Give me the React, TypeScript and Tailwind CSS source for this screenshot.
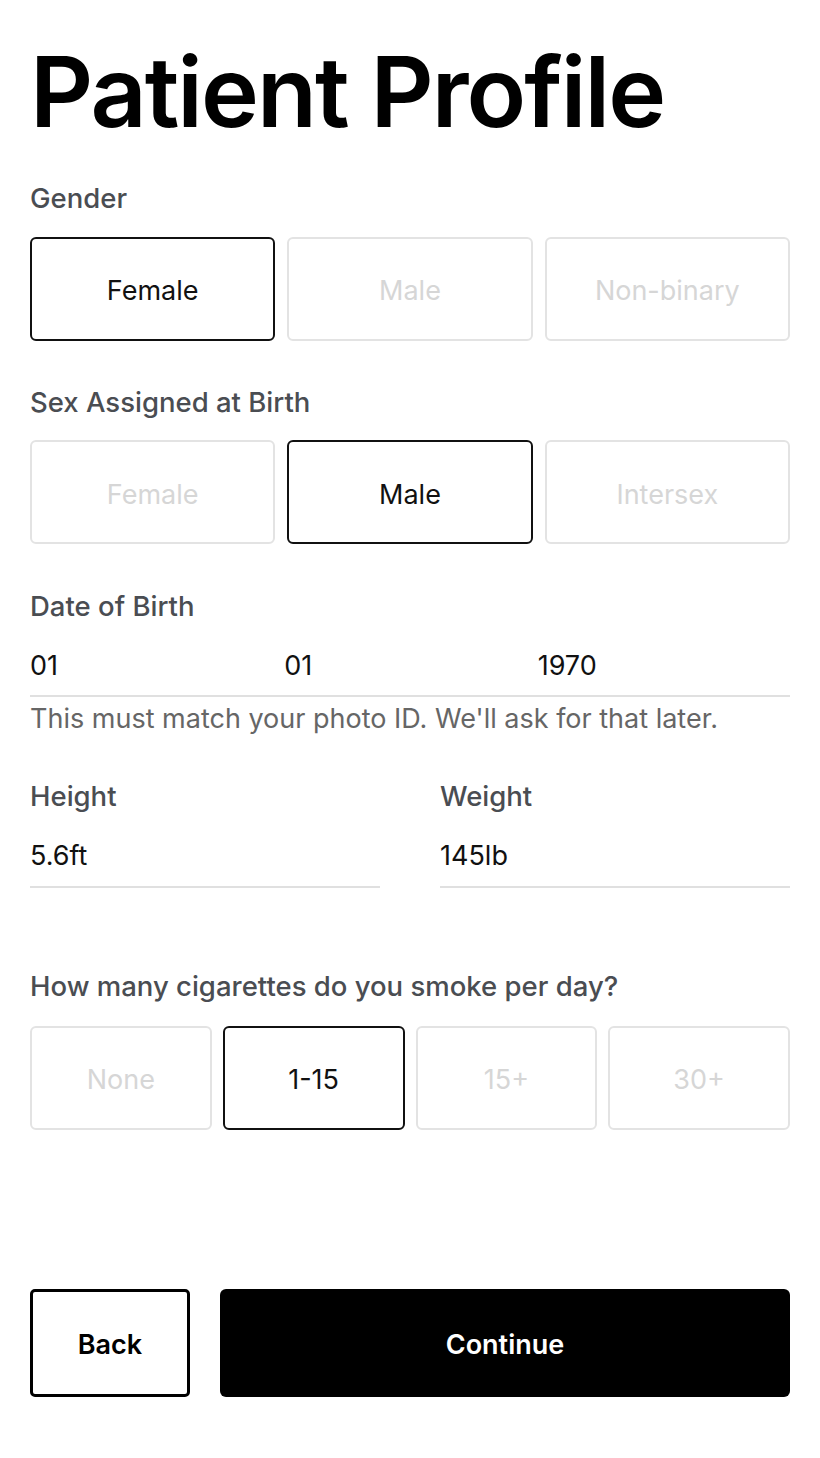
import React from "react";

const font = { fontFamily: "Inter, 'Noto Sans', sans-serif" };

function Option({ label, selected }: { label: string; selected?: boolean }) {
  return (
    <div
      className={
        "flex h-[104px] items-center justify-center rounded-[6px] border-2 pt-[6px] text-[27px] " +
        (selected ? "border-[#111] text-[#111]" : "border-[#e3e3e3] text-[#d6d6d6]")
      }
    >
      {label}
    </div>
  );
}

function Label({ children }: { children: React.ReactNode }) {
  return <div className="text-[27.5px] font-medium leading-none text-[#4a4d52]">{children}</div>;
}

export default function App() {
  return (
    <div className="min-h-[1458px] bg-white px-[30px] text-[#111]" style={font}>
      <h1 className="pt-[43px] text-[98px] font-semibold leading-none tracking-[-0.02em] text-black">
        Patient Profile
      </h1>

      <div className="mt-[44px]">
        <Label>Gender</Label>
        <div className="mt-[24px] grid grid-cols-3 gap-[12px]">
          <Option label="Female" selected />
          <Option label="Male" />
          <Option label="Non-binary" />
        </div>
      </div>

      <div className="mt-[48px]">
        <Label>Sex Assigned at Birth</Label>
        <div className="mt-[24px] grid grid-cols-3 gap-[12px]">
          <Option label="Female" />
          <Option label="Male" selected />
          <Option label="Intersex" />
        </div>
      </div>

      <div className="mt-[49px]">
        <Label>Date of Birth</Label>
        <div className="mt-[31px] grid grid-cols-3 border-b-2 border-[#e0e0e0] pb-[16px] text-[27px] leading-none">
          <span>01</span>
          <span className="pl-[1px]">01</span>
          <span className="pl-[1px]">1970</span>
        </div>
        <div className="mt-[8px] text-[27px] leading-none text-[#666]">
          This must match your photo ID. We'll ask for that later.
        </div>
      </div>

      <div className="mt-[51px] grid grid-cols-2 gap-[60px]">
        <div>
          <Label>Height</Label>
          <div className="mt-[32px] border-b-2 border-[#e0e0e0] pb-[17px] text-[27px] leading-none">5.6ft</div>
        </div>
        <div>
          <Label>Weight</Label>
          <div className="mt-[32px] border-b-2 border-[#e0e0e0] pb-[17px] text-[27px] leading-none">145lb</div>
        </div>
      </div>

      <div className="mt-[85px]">
        <Label>How many cigarettes do you smoke per day?</Label>
        <div className="mt-[25px] grid grid-cols-4 gap-[11px]">
          <Option label="None" />
          <Option label="1-15" selected />
          <Option label="15+" />
          <Option label="30+" />
        </div>
      </div>

      <div className="mt-[159px] flex gap-[30px]">
        <button className="flex h-[108px] w-[160px] items-center justify-center rounded-[5px] border-[3px] border-black pt-[5px] text-[27px] font-semibold text-black">
          Back
        </button>
        <button className="flex h-[108px] flex-1 items-center justify-center rounded-[6px] bg-black pt-[5px] text-[27px] font-semibold text-white">
          Continue
        </button>
      </div>
    </div>
  );
}
